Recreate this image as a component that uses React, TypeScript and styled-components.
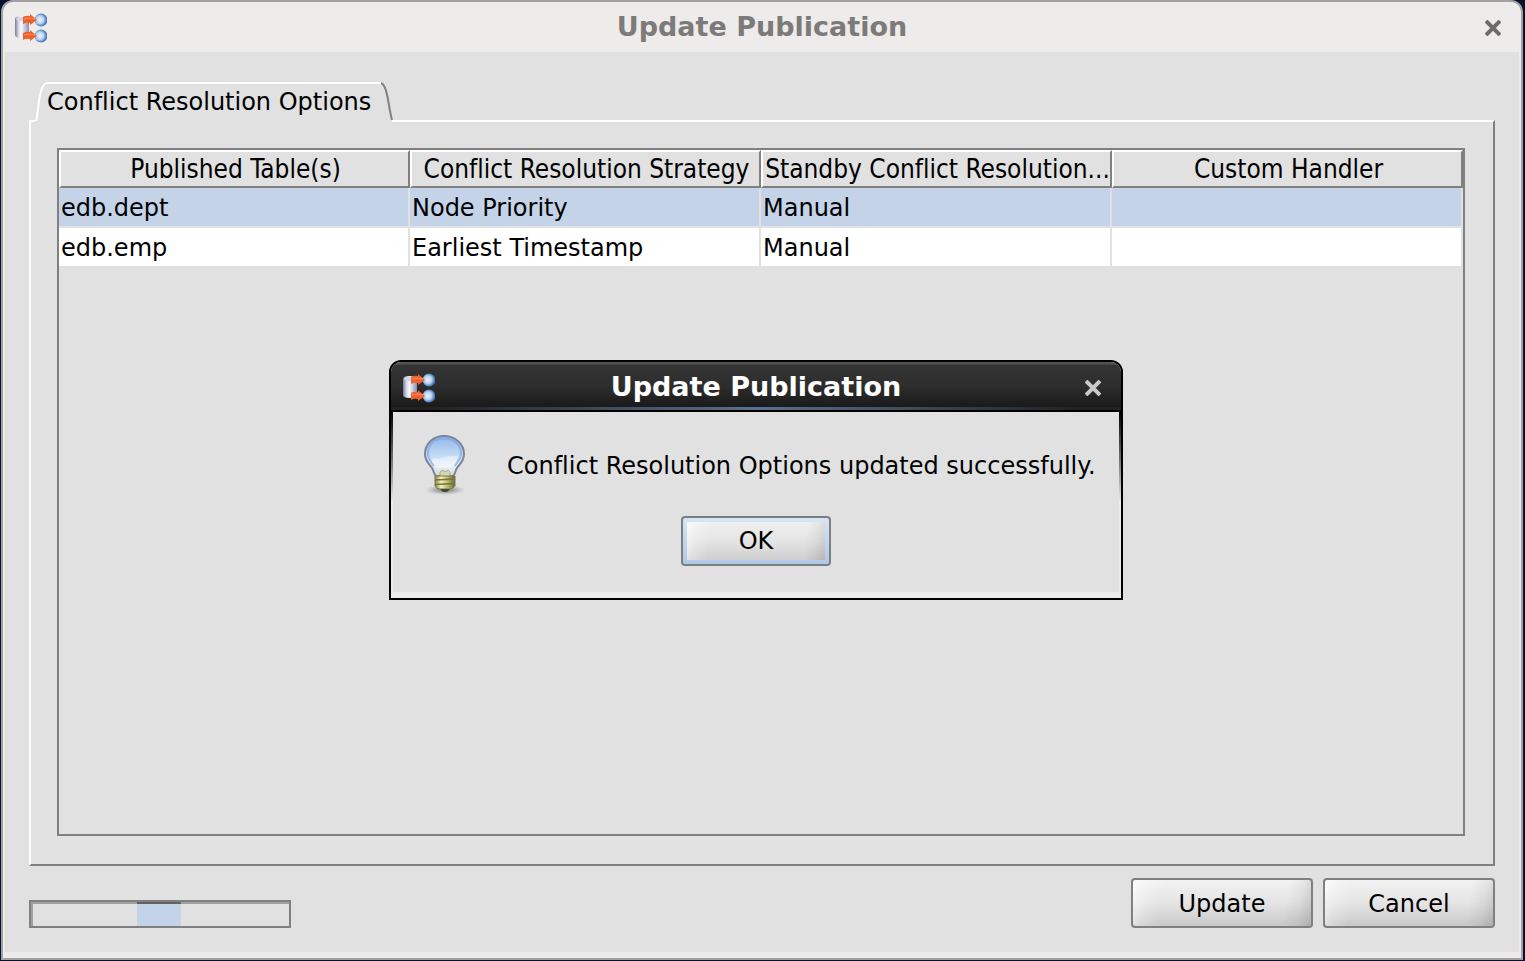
import React from "react";
import styled, { createGlobalStyle, css } from "styled-components";

const GlobalStyle = createGlobalStyle`
  *, *::before, *::after { box-sizing: border-box; }
  body {
    margin: 0;
    background: #08102f;
    color: #000;
    font-family: "DejaVu Sans", sans-serif;
    font-size: 24px;
    font-variant-ligatures: none;
    line-height: 30px;
  }
  button { font: inherit; color: inherit; }
`;

const Desktop = styled.div`
  display: flex;
  min-height: 100vh;
  padding: 0 2px 1px 1px;
`;

const Window = styled.main`
  position: relative;
  display: flex;
  flex: 1;
  flex-direction: column;
  min-width: 0;
  background: #edecea;
  border: 2px solid #a3a2a3;
  border-radius: 12px 12px 0 0;
`;

const TitleBar = styled.header<{ $dark?: boolean }>`
  display: flex;
  align-items: center;
  padding: 2px 12px 0;
  height: 50px;
  color: #7c7b7a;
  ${(p) =>
    p.$dark &&
    css`
      padding-top: 4px;
      color: #fff;
      background:
        linear-gradient(90deg, #222 6%, #587193 50%, #222 94%) bottom / 100% 3px no-repeat,
        linear-gradient(#525252 0 2px, #343434 3px, #2d2d2d 50%, #171717);
      border-bottom: 2px solid #000;
      border-radius: 10px 10px 0 0;
    `}
`;

const Title = styled.h1`
  flex: 1;
  margin: 0;
  padding-bottom: 3px;
  text-align: center;
  font-size: 27px;
  font-weight: bold;
  line-height: 30px;
`;

const CloseButton = styled.button<{ $dark?: boolean }>`
  display: flex;
  padding: 8px;
  border: 0;
  background: none;
  color: ${(p) => (p.$dark ? "#c9c9c9" : "#6d6c6b")};
`;

const WindowBody = styled.div`
  display: flex;
  flex: 1;
  flex-direction: column;
  margin: 0 2px 6px;
  padding: 30px 24px 24px;
  background: #e1e1e1;
`;

const TabList = styled.div`
  display: flex;
  padding-left: 6px;
`;

const Tab = styled.button`
  position: relative;
  z-index: 1;
  display: flex;
  height: 40px;
  margin-bottom: -2px;
  padding: 0;
  border: 0;
  background: none;
`;

const TabLabel = styled.span`
  height: 40px;
  padding: 3px 10px 0 0;
  border-top: 2px solid #fff;
  background: #e1e1e1;
`;

const TabPanel = styled.section`
  display: flex;
  flex: 1;
  padding: 26px 28px 28px 26px;
  border: 2px solid #808080;
  border-top-color: #fff;
  border-left-color: #fff;
`;

const TableFrame = styled.div`
  flex: 1;
  min-width: 0;
  border: 2px solid #808080;
`;

const Table = styled.table`
  width: 100%;
  table-layout: fixed;
  border-collapse: separate;
  border-spacing: 0;
`;

const HeadCell = styled.th`
  width: 25%;
  height: 38px;
  padding: 0 0 0 2px;
  border: 2px solid #808080;
  border-top-color: #fff;
  border-left-color: #fff;
  font-family: "DejaVu Sans Condensed", "DejaVu Sans", sans-serif;
  font-stretch: condensed;
  font-size: 26px;
  font-weight: normal;
  text-align: center;
  white-space: nowrap;
`;

const Row = styled.tr<{ $selected?: boolean }>`
  background: ${(p) => (p.$selected ? "#c4d3e8" : "#fff")};
`;

const Cell = styled.td`
  height: 40px;
  padding: 2px 2px 0;
  border-right: 2px solid #e1e1e1;
  border-bottom: 2px solid #e1e1e1;
  white-space: nowrap;
`;

const Footer = styled.footer`
  display: flex;
  align-items: flex-end;
  gap: 10px;
  margin-top: 12px;
`;

const Progress = styled.div`
  display: flex;
  width: 262px;
  height: 28px;
  margin-right: auto;
  padding-left: 106px;
  border: 2px solid #808080;
  box-shadow: inset 2px 2px 0 #a0a0a0;
`;

const ProgressBox = styled.span`
  width: 44px;
  border-top: 2px solid #606266;
  background: #c3d3e8;
`;

const Button = styled.button<{ $width: number; $focused?: boolean }>`
  width: ${(p) => p.$width}px;
  height: 50px;
  padding: 2px 0 0;
  border: 2px solid #808080;
  border-radius: 4px;
  background:
    linear-gradient(100deg, #ffffffa0, #ffffff40 8%, #ffffff00 18%, #00000000 84%, #0000000c 92%, #00000024) padding-box,
    linear-gradient(#f2f2f2, #e4e4e4 50%, #c9c9c9) padding-box;
  ${(p) =>
    p.$focused &&
    css`
      border-color: #7b8086;
      padding: 4px;
      background:
        linear-gradient(100deg, #ffffffa0, #ffffff40 8%, #ffffff00 18%, #00000000 84%, #0000000c 92%, #00000020) content-box,
        linear-gradient(#f0f0f0, #e4e4e4 50%, #cfcfcf) content-box,
        linear-gradient(#d8e5f4, #b0c8e6) padding-box;
      line-height: 38px;
    `}
`;

const DialogLayer = styled.div`
  position: absolute;
  inset: 0;
  display: grid;
  place-items: center;
  padding-right: 12px;
`;

const Dialog = styled.section`
  width: 734px;
  max-width: 100%;
  border: 2px solid #000;
  border-radius: 12px 12px 0 0;
  background: #edecea;
`;

const DialogBody = styled.div`
  display: flex;
  flex-direction: column;
  height: 180px;
  padding-top: 20px;
  margin-bottom: 6px;
  background:
    linear-gradient(#000, #777 50px, #edecea 90px) left / 2px 100% no-repeat,
    linear-gradient(#000, #777 50px, #edecea 90px) right / 2px 100% no-repeat,
    #e1e1e1;
`;

const MessageRow = styled.div`
  display: flex;
  align-items: center;
  gap: 40px;
  height: 64px;
  padding-left: 32px;
`;

const Message = styled.p`
  margin: 0;
  padding-top: 4px;
  white-space: nowrap;
`;

const DialogActions = styled.div`
  display: flex;
  justify-content: center;
  padding-top: 20px;
`;

function ReplicationIcon({ id }: { id: string }) {
  return (
    <svg width="32" height="32" viewBox="0 0 32 32" aria-hidden="true">
      <defs>
        <linearGradient id={id + "c"}>
          <stop offset="0" stopColor="#777a9c" />
          <stop offset=".25" stopColor="#d6d6e6" />
          <stop offset=".45" stopColor="#fbfbff" />
          <stop offset="1" stopColor="#8b8daf" />
        </linearGradient>
        <radialGradient id={id + "d"} cx=".42" cy=".48">
          <stop offset=".2" stopColor="#dfeaf8" />
          <stop offset=".6" stopColor="#b5cfee" />
          <stop offset="1" stopColor="#4779b8" />
        </radialGradient>
      </defs>
      <path d="M0 7q0-3 7-3t7 3v16q0 3-7 3t-7-3z" fill={`url(#${id}c)`} />
      <ellipse cx="7" cy="7" rx="6" ry="2" fill="#d4d4e2" />
      <circle cx="26" cy="8" r="6.5" fill={`url(#${id}d)`} />
      <circle cx="26" cy="24" r="6.5" fill={`url(#${id}d)`} />
      <path d="M8 5q4-2 7-1V2l7 6-7 5v-2q-4-1-7 1z" fill="#ee602c" />
      <path d="M8 21q4-2 7-1v-2l7 6-7 5v-2q-4-1-7 1z" fill="#ee602c" />
      <path d="M9 7q5-1.500 11 0M9 23q5-1.500 11 0" fill="none" stroke="#f98352" strokeWidth="1.500" />
    </svg>
  );
}

function CloseIcon() {
  return (
    <svg width="16" height="16" viewBox="0 0 16 16" fill="none" stroke="currentColor" strokeWidth="4" aria-hidden="true">
      <path d="M1 1l14 14M15 1L1 15" />
    </svg>
  );
}

function BulbIcon() {
  return (
    <svg width="44" height="62" viewBox="0 0 44 62" aria-hidden="true">
      <defs>
        <linearGradient id="glass" x2="0" y2="1">
          <stop offset="0" stopColor="#8fb6ea" />
          <stop offset=".5" stopColor="#c5dbf6" />
          <stop offset=".75" stopColor="#e9eef4" />
          <stop offset="1" stopColor="#d3d9df" />
        </linearGradient>
        <linearGradient id="screw">
          <stop offset="0" stopColor="#85864c" />
          <stop offset=".3" stopColor="#f3f3b8" />
          <stop offset=".65" stopColor="#b5b669" />
          <stop offset="1" stopColor="#666735" />
        </linearGradient>
        <radialGradient id="shade">
          <stop offset="0" stopColor="#555" stopOpacity=".8" />
          <stop offset="1" stopColor="#777" stopOpacity="0" />
        </radialGradient>
      </defs>
      <ellipse cx="22" cy="57" rx="20" ry="5" fill="url(#shade)" />
      <path d="M21 3C10 3 2 11 2 21c0 7 4 10 7 14 2 3 2 7 4 8h17c2-1 2-5 4-8 3-4 7-7 7-14C41 11 32 3 21 3z" fill="url(#glass)" stroke="#7b8496" strokeWidth="2" />
      <path d="M21 5.500C11 5.500 5 12 5 21c0 5 3 8 6 12M21 5.500c10 0 17 6.500 17 15.500 0 5-4 8-6 12" fill="none" stroke="#7fa7de" strokeWidth="2" opacity=".7" />
      <path d="M8 27q4-3 8-1 9-4 19-3-1 7-7 12H15q-5-3-7-8z" fill="#fff" opacity=".4" />
      <path d="M17 43v-4l3-2 2 2 3-2 2 2v4" fill="#d4d8af" stroke="#a7ab90" strokeWidth="1" />
      <path d="M12 43h20v10q-2 3-5 3H17q-4 0-5-3z" fill="url(#screw)" stroke="#7a7b4c" strokeWidth="1" />
      <path d="M12 47l20-1M12 51.500l20-1" stroke="#74753f" strokeWidth="1.500" />
      <path d="M17 56h10l-3 3h-4z" fill="#444738" />
    </svg>
  );
}

const columns = [
  "Published Table(s)",
  "Conflict Resolution Strategy",
  "Standby Conflict Resolution...",
  "Custom Handler",
];

const rows = [
  ["edb.dept", "Node Priority", "Manual", ""],
  ["edb.emp", "Earliest Timestamp", "Manual", ""],
];

export default function App() {
  return (
    <>
      <GlobalStyle />
      <Desktop>
        <Window>
          <TitleBar>
            <ReplicationIcon id="main" />
            <Title>Update Publication</Title>
            <CloseButton aria-label="Close window">
              <CloseIcon />
            </CloseButton>
          </TitleBar>
          <WindowBody>
            <TabList role="tablist">
              <Tab role="tab" aria-selected="true" id="tab-conflict" aria-controls="panel-conflict">
                <svg width="12" height="40" viewBox="0 0 12 40" aria-hidden="true">
                  <path d="M0 40C4 34 3 2 12 1V40z" fill="#e1e1e1" />
                  <path d="M1 39C4 30 3 3 12 1" fill="none" stroke="#fff" strokeWidth="2" />
                </svg>
                <TabLabel>Conflict Resolution Options</TabLabel>
                <svg width="12" height="40" viewBox="0 0 12 40" aria-hidden="true">
                  <path d="M0 1C8 2 7 26 11 40H0z" fill="#e1e1e1" />
                  <path d="M0 1C7 4 7 24 11 38" fill="none" stroke="#808080" strokeWidth="2" />
                </svg>
              </Tab>
            </TabList>
            <TabPanel role="tabpanel" id="panel-conflict" aria-labelledby="tab-conflict">
              <TableFrame>
                <Table>
                  <thead>
                    <tr>
                      {columns.map((name) => (
                        <HeadCell key={name} scope="col">{name}</HeadCell>
                      ))}
                    </tr>
                  </thead>
                  <tbody>
                    {rows.map((row, i) => (
                      <Row key={row[0]} $selected={i === 0}>
                        {row.map((value, j) => (
                          <Cell key={j}>{value}</Cell>
                        ))}
                      </Row>
                    ))}
                  </tbody>
                </Table>
              </TableFrame>
            </TabPanel>
            <Footer>
              <Progress role="progressbar" aria-label="Update progress">
                <ProgressBox />
              </Progress>
              <Button $width={182}>Update</Button>
              <Button $width={172}>Cancel</Button>
            </Footer>
          </WindowBody>
          <DialogLayer>
            <Dialog role="dialog" aria-labelledby="dialog-title">
              <TitleBar $dark>
                <ReplicationIcon id="dialog" />
                <Title as="h2" id="dialog-title">Update Publication</Title>
                <CloseButton $dark aria-label="Close dialog">
                  <CloseIcon />
                </CloseButton>
              </TitleBar>
              <DialogBody>
                <MessageRow>
                  <BulbIcon />
                  <Message>Conflict Resolution Options updated successfully.</Message>
                </MessageRow>
                <DialogActions>
                  <Button $width={150} $focused>OK</Button>
                </DialogActions>
              </DialogBody>
            </Dialog>
          </DialogLayer>
        </Window>
      </Desktop>
    </>
  );
}
